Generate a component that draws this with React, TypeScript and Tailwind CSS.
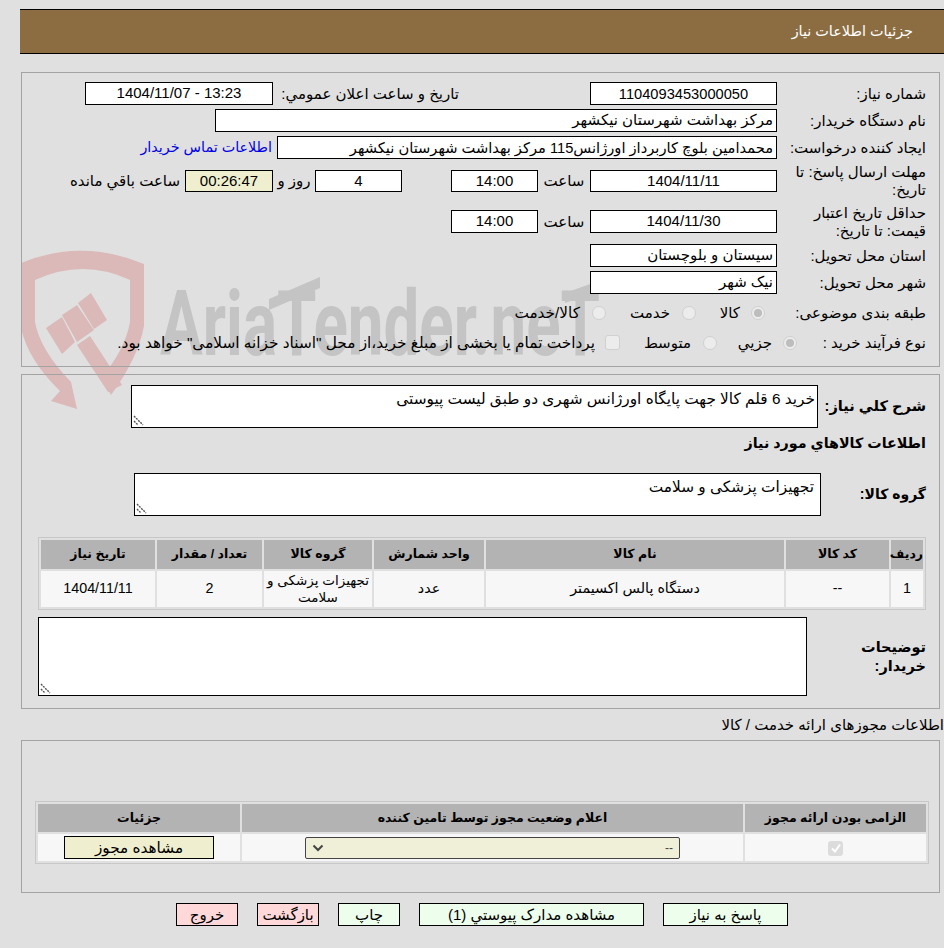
const Box = ({ className = "", children }: { className?: string; children?: React.ReactNode }) => (
  <div className={`h-[23px] border border-black bg-white flex items-center shrink-0 text-[15px] ${className}`}>{children}</div>
);

const Label = ({ className = "", children }: { className?: string; children: React.ReactNode }) => (
  <div className={`shrink-0 leading-[18px] ${className}`}>{children}</div>
);

const Grip = () => (
  <svg className="absolute left-[1px] bottom-[1px]" width="11" height="11" viewBox="0 0 11 11">
    <path d="M1 1l9 9M1 6l4 4" stroke="#555" strokeWidth="1.4" strokeDasharray="2 1" fill="none" />
  </svg>
);

const Radio = ({ checked }: { checked?: boolean }) => (
  <span className="w-[14px] h-[14px] rounded-full bg-[#ececec] border border-[#d0d0d0] flex items-center justify-center shrink-0">
    {checked && <span className="w-[8px] h-[8px] rounded-full bg-[#bdbdbd]" />}
  </span>
);

// logo behind the first panel, coordinates are page pixels
const Watermark = () => (
  <svg className="absolute left-0 top-[240px] pointer-events-none" width="640" height="170" viewBox="0 240 640 170">
    <path
      d="M21 263Q82 238 144 264L144 326Q138 358 111 395L101 378Q125 350 130 322L130 280Q83 258 35 280L35 322Q40 350 71 382L77 409L51 401L60 391Q28 360 21 328Z"
      fill="#dbb9b9"
    />
    <path d="M46 328L62 317L75 342L62 354Z M62 315L77 305L94 330L77 342Z M78 303L91 293L107 320L94 329Z M77 345L90 336L122 385L108 392Z" fill="#dbb9b9" />
    <path d="M269 299L320 277L320 288L269 310Z M565 293L618 274L618 284L565 303Z" fill="#c4c4c4" />
    <text
      x="160"
      y="355"
      fontFamily="Roboto, sans-serif"
      fontWeight="700"
      fontSize="90"
      textLength="440"
      lengthAdjust="spacingAndGlyphs"
      fill="#c4c4c4"
      direction="ltr"
    >
      AriaTender.neT
    </text>
  </svg>
);

const Cell = ({ className = "", children }: { className?: string; children: React.ReactNode }) => (
  <td className={`p-0 bg-[#f7f7f7] text-center text-[14.3px] ${className}`}>{children}</td>
);

const Head = ({ className = "", children }: { className?: string; children: React.ReactNode }) => (
  <th className={`p-0 bg-[#b3b3b3] text-center text-[12.5px] font-bold ${className}`}>{children}</th>
);

const ActionBtn = ({ red, className = "", children }: { red?: boolean; className?: string; children: React.ReactNode }) => (
  <button className={`h-[23px] border border-black flex items-center justify-center pt-[2px] text-[15px] ${red ? "bg-[#ffd9d9]" : "bg-[#edfeec]"} ${className}`}>
    {children}
  </button>
);

export default function App() {
  return (
    <div dir="rtl" className="relative w-[944px] h-[948px] overflow-hidden bg-[#e0e0e0] pt-[9px] text-[15px] text-black font-['Liberation_Sans','DejaVu_Sans',sans-serif]">
      <Watermark />

      <div className="relative w-[924px] h-[45px] bg-[#8c6d42] border-y border-black text-white pr-[31px] flex items-center text-[14.4px]">
        جزئيات اطلاعات نياز
      </div>

      <section className="relative mt-[18px] mr-[4px] w-[919px] h-[295px] border border-[#a3a3a3] pr-[13px] pt-[9px]">
        <div className="flex items-center h-[23px]">
          <Label className="w-[149px]">شماره نياز:</Label>
          <Box className="w-[187px] justify-center !text-[14.67px]">1104093453000050</Box>
          <Label className="mr-[131px] w-[186px]">تاريخ و ساعت اعلان عمومي:</Label>
          <Box className="w-[188px] justify-center">13:23 - 1404/11/07</Box>
        </div>
        <div className="flex items-center h-[23px] mt-[4px]">
          <Label className="w-[149px]">نام دستگاه خريدار:</Label>
          <Box className="w-[562px] pr-[3px]">مرکز بهداشت شهرستان نیکشهر</Box>
        </div>
        <div className="flex items-center h-[23px] mt-[4px]">
          <Label className="w-[149px] whitespace-nowrap">ايجاد کننده درخواست:</Label>
          <Box className="w-[500px] pr-[3px] whitespace-nowrap overflow-hidden !text-[14.67px]">محمدامین بلوچ کاربرداز اورژانس115 مرکز بهداشت شهرستان نیکشهر</Box>
          <a className="mr-[5px] text-[#0000ee] whitespace-nowrap text-[14.33px]">اطلاعات تماس خريدار</a>
        </div>
        <div className="flex items-center h-[36px] mt-[4px]">
          <Label className="w-[149px]">مهلت ارسال پاسخ: تا تاريخ:</Label>
          <Box className="w-[187px] !h-[22px] justify-center">1404/11/11</Box>
          <Label className="w-[52px] text-center">ساعت</Label>
          <Box className="w-[87px] !h-[22px] justify-center">14:00</Box>
          <span className="w-[49px]" />
          <Box className="w-[87px] !h-[22px] justify-center">4</Box>
          <Label className="w-[42px] text-center">روز و</Label>
          <Box className="w-[88px] !h-[22px] justify-center !bg-[#efefcf]">00:26:47</Box>
          <Label className="mr-[5px] whitespace-nowrap">ساعت باقي مانده</Label>
        </div>
        <div className="flex items-center h-[37px] mt-[4px]">
          <Label className="w-[149px]">حداقل تاريخ اعتبار<br />قيمت: تا تاريخ:</Label>
          <Box className="w-[187px] justify-center">1404/11/30</Box>
          <Label className="w-[52px] text-center">ساعت</Label>
          <Box className="w-[87px] justify-center">14:00</Box>
        </div>
        <div className="flex items-center h-[23px] mt-[4px]">
          <Label className="w-[149px]">استان محل تحويل:</Label>
          <Box className="w-[187px] pr-[3px]">سیستان و بلوچستان</Box>
        </div>
        <div className="flex items-center h-[23px] mt-[4px]">
          <Label className="w-[149px]">شهر محل تحويل:</Label>
          <Box className="w-[187px] pr-[3px]">نیک شهر</Box>
        </div>
        <div className="flex items-center h-[23px] mt-[7px]">
          <Label className="w-[161px]">طبقه بندی موضوعی:</Label>
          <Radio checked />
          <span className="mr-[11px] w-[44px] pt-[2px]">کالا</span>
          <Radio />
          <span className="mr-[12px] w-[64px] pt-[2px]">خدمت</span>
          <Radio />
          <span className="mr-[12px] text-[15.3px] pt-[2px]">کالا/خدمت</span>
        </div>
        <div className="flex items-center h-[23px] mt-[7px]">
          <Label className="w-[129px]">نوع فرآيند خريد :</Label>
          <Radio checked />
          <span className="mr-[11px] w-[55px] pt-[2px]">جزيي</span>
          <Radio />
          <span className="mr-[12px] w-[71px] pt-[2px]">متوسط</span>
          <span className="w-[15px] h-[15px] rounded-[3px] bg-[#ececec] border border-[#d0d0d0] shrink-0" />
          <span className="mr-[10px] whitespace-nowrap text-[15.33px] pt-[2px]">پرداخت تمام یا بخشی از مبلغ خرید،از محل "اسناد خزانه اسلامی" خواهد بود.</span>
        </div>
      </section>

      <section className="relative mt-[7px] mr-[4px] w-[919px] h-[335px] border border-[#a3a3a3] pr-[13px] pt-[10px]">
        <div className="flex items-center">
          <span className="font-bold w-[108px] shrink-0 text-[14.6px] whitespace-nowrap">شرح کلي نياز:</span>
          <div className="relative w-[687px] h-[43px] border border-black bg-white pr-[2px] pt-[2px] text-[15.33px]">
            خرید 6 قلم کالا جهت پایگاه اورژانس شهری دو طبق لیست پیوستی
            <Grip />
          </div>
        </div>
        <div className="font-bold mt-[4px] h-[24px] flex items-center text-[14.3px]">اطلاعات کالاهاي مورد نياز</div>
        <div className="flex items-center mt-[17px]">
          <span className="font-bold w-[105px] shrink-0 text-[14px]">گروه کالا:</span>
          <div className="relative w-[687px] h-[43px] border border-black bg-white pr-[6px] pt-[2px] text-[15.33px]">
            تجهیزات پزشکی و سلامت
            <Grip />
          </div>
        </div>
        <table className="mt-[21px] w-[888px] border border-[#c8c8c8] border-separate border-spacing-[2px] table-fixed">
          <thead>
            <tr className="h-[29px]">
              <Head className="w-[32px]">رديف</Head>
              <Head className="w-[103px]">کد کالا</Head>
              <Head className="w-[298px]">نام کالا</Head>
              <Head className="w-[110px]">واحد شمارش</Head>
              <Head className="w-[108px]">گروه کالا</Head>
              <Head className="w-[105px]">تعداد / مقدار</Head>
              <Head>تاريخ نياز</Head>
            </tr>
          </thead>
          <tbody>
            <tr className="h-[36px]">
              <Cell>1</Cell>
              <Cell>--</Cell>
              <Cell>دستگاه پالس اکسیمتر</Cell>
              <Cell>عدد</Cell>
              <Cell className="leading-[17px] !text-[13.5px]">تجهیزات پزشکی و سلامت</Cell>
              <Cell>2</Cell>
              <Cell>1404/11/11</Cell>
            </tr>
          </tbody>
        </table>
        <div className="flex items-center mt-[7px]">
          <span className="font-bold w-[119px] leading-[19px] shrink-0 text-[14.5px]">توضیحات خریدار:</span>
          <div className="relative w-[769px] h-[79px] border border-black bg-white">
            <Grip />
          </div>
        </div>
      </section>

      <div className="mt-[4px] h-[24px] flex items-center whitespace-nowrap text-[15px]">اطلاعات مجوزهای ارائه خدمت / کالا</div>

      <section className="relative mt-[3px] mr-[4px] w-[919px] h-[153px] border border-[#a3a3a3] pt-[60px] pr-[10px]">
        <table className="w-[894px] border border-[#c8c8c8] border-separate border-spacing-[2px] table-fixed">
          <thead>
            <tr className="h-[28px]">
              <Head className="w-[181px]">الزامی بودن ارائه مجوز</Head>
              <Head>اعلام وضعیت مجوز توسط تامین کننده</Head>
              <Head className="w-[202px]">جزئیات</Head>
            </tr>
          </thead>
          <tbody>
            <tr className="h-[27px]">
              <Cell>
                <span className="inline-flex w-[15px] h-[15px] rounded-[3px] bg-[#dcdcdc] items-center justify-center align-middle">
                  <svg width="12" height="12" viewBox="0 0 12 12"><path d="M2 6.5l3 3 5-7" stroke="#fff" strokeWidth="2" fill="none" /></svg>
                </span>
              </Cell>
              <Cell>
                <div className="mr-[63px] w-[375px] h-[22px] bg-[#f0efd8] border border-[#444] rounded-[2px] flex items-center justify-between px-[6px] text-[12px] text-[#444]">
                  <span>--</span>
                  <svg width="12" height="8" viewBox="0 0 12 8"><path d="M1.5 1.5L6 6l4.5-4.5" stroke="#444" strokeWidth="2" fill="none" /></svg>
                </div>
              </Cell>
              <Cell>
                <div className="mx-auto w-[150px] h-[23px] bg-[#efefcf] border border-black flex items-center justify-center pt-[2px] text-[15.3px]">مشاهده مجوز</div>
              </Cell>
            </tr>
          </tbody>
        </table>
      </section>

      <div className="mt-[10px] flex pr-[156px] gap-[19px]">
        <ActionBtn className="w-[125px]">پاسخ به نياز</ActionBtn>
        <ActionBtn className="w-[225px]">مشاهده مدارک پيوستي (1)</ActionBtn>
        <ActionBtn className="w-[62px]">چاپ</ActionBtn>
        <ActionBtn red className="w-[62px]">بازگشت</ActionBtn>
        <ActionBtn red className="w-[62px]">خروج</ActionBtn>
      </div>
    </div>
  );
}
